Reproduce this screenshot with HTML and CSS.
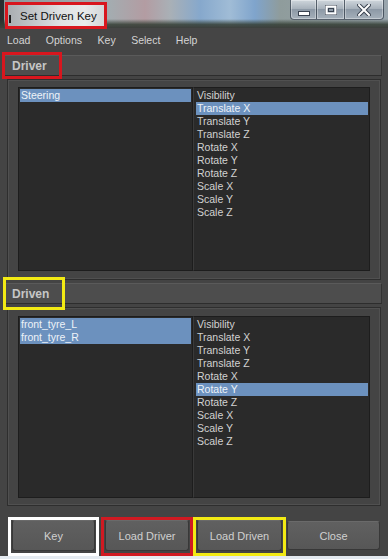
FILE: index.html
```html
<!DOCTYPE html>
<html>
<head>
<meta charset="utf-8">
<link rel="stylesheet" href="styles.css">
</head>
<body>
<div class="titlebar">
  <div class="title-box"><span class="title-icon"></span><span class="title-text">Set Driven Key</span></div>
  <div class="winbtns">
    <div class="wb wb-min"><svg width="12" height="6" viewBox="0 0 12 6"><rect x="0.5" y="1.5" width="11" height="4" fill="#fff" stroke="#3a4350" stroke-width="1"/></svg></div>
    <div class="wb wb-max"><svg width="12" height="10" viewBox="0 0 12 10"><rect x="0.5" y="0.5" width="11" height="9" fill="none" stroke="#3a4350" stroke-width="1"/><rect x="1.5" y="1.5" width="9" height="7" fill="none" stroke="#fff" stroke-width="2"/><rect x="3.5" y="3.5" width="5" height="3" fill="none" stroke="#3a4350" stroke-width="1"/></svg></div>
    <div class="wb wb-close"><svg width="14" height="12" viewBox="0 0 14 12"><path d="M2 1 L12 11 M12 1 L2 11" stroke="#3a4350" stroke-width="4" stroke-linecap="square"/><path d="M2 1 L12 11 M12 1 L2 11" stroke="#fff" stroke-width="2" stroke-linecap="square"/></svg></div>
  </div>
</div>
<div class="menubar">
  <span>Load</span><span>Options</span><span>Key</span><span>Select</span><span>Help</span>
</div>

<div class="sec-head">
  <span class="sec-label">Driver</span>
  <span class="mark mark-red-head"></span>
</div>
<div class="frame">
  <div class="lists lists-driver">
    <div class="list list-l">
      <div class="item sel">Steering</div>
    </div>
    <div class="list list-r">
      <div class="item">Visibility</div>
      <div class="item sel">Translate X</div>
      <div class="item">Translate Y</div>
      <div class="item">Translate Z</div>
      <div class="item">Rotate X</div>
      <div class="item">Rotate Y</div>
      <div class="item">Rotate Z</div>
      <div class="item">Scale X</div>
      <div class="item">Scale Y</div>
      <div class="item">Scale Z</div>
    </div>
  </div>
</div>

<div class="sec-head sec-head-2">
  <span class="sec-label">Driven</span>
  <span class="mark mark-yellow-head"></span>
</div>
<div class="frame frame-2">
  <div class="lists lists-driven">
    <div class="list list-l">
      <div class="item sel">front_tyre_L</div>
      <div class="item sel">front_tyre_R</div>
    </div>
    <div class="list list-r">
      <div class="item">Visibility</div>
      <div class="item">Translate X</div>
      <div class="item">Translate Y</div>
      <div class="item">Translate Z</div>
      <div class="item">Rotate X</div>
      <div class="item sel">Rotate Y</div>
      <div class="item">Rotate Z</div>
      <div class="item">Scale X</div>
      <div class="item">Scale Y</div>
      <div class="item">Scale Z</div>
    </div>
  </div>
</div>

<div class="buttons">
  <div class="bw bw-white"><div class="btn">Key</div></div>
  <div class="bw bw-red"><div class="btn">Load Driver</div></div>
  <div class="bw bw-yellow"><div class="btn">Load Driven</div></div>
  <div class="bw bw-none"><div class="btn">Close</div></div>
</div>
<div class="desk"></div>
</body>
</html>
```

FILE: styles.css
```css
html, body {
  margin: 0;
  padding: 0;
}
body {
  width: 388px;
  height: 559px;
  overflow: hidden;
  background: #444444;
  font-family: "Liberation Sans", Arial, sans-serif;
  font-size: 10.5px;
  color: #d0d0d0;
}

/* ---------- title bar ---------- */
.titlebar {
  position: relative;
  height: 28px;
  display: flex;
  align-items: flex-start;
  background: linear-gradient(90deg, #2a2e30 0, #2a2e30 4px, #8e989c 4px, #a4acb0 110px, #b39ca2 145px, #a9b0b6 170px, #86a8cc 200px, #a0bcd6 230px, #7fa4cc 255px, #8f9c9c 280px, #9aa6ae 388px);
}
.titlebar::after {
  content: "";
  position: absolute;
  left: 0;
  right: 0;
  bottom: 0;
  height: 9px;
  background: linear-gradient(180deg, rgba(60, 80, 60, 0), rgba(52, 62, 52, 0.85) 60%, #3c3f3c);
}
.title-box {
  position: relative;
  z-index: 1;
  margin: 2px 0 0 5px;
  width: 96px;
  height: 21px;
  border: 3px solid #d8161e;
  background: linear-gradient(90deg, #a9adb1, #dfe1e3 55%, #e9eaeb 80%, #d3d6d8);
  display: flex;
  align-items: center;
}
.title-icon {
  width: 2px;
  height: 8px;
  margin: 10px 0 0 1px;
  background: #1c1c1c;
  align-self: flex-start;
}
.title-text {
  margin-left: 9px;
  font-size: 11.5px;
  color: #111;
  white-space: nowrap;
}
.winbtns {
  margin-left: auto;
  margin-right: 4px;
  display: flex;
  position: relative;
  z-index: 1;
}
.wb {
  height: 19px;
  display: flex;
  align-items: center;
  justify-content: center;
  border: 1px solid rgba(50, 60, 72, 0.75);
  border-top: none;
  background: linear-gradient(180deg, #cfd6dc 0, #a8b2bc 45%, #8d99a6 50%, #a5b0ba 100%);
  box-shadow: inset 0 0 0 1px rgba(255, 255, 255, 0.35);
}
.wb-min { width: 25px; border-radius: 0 0 0 4px; }
.wb-max { width: 27px; border-left: none; }
.wb-close { width: 38px; border-left: none; border-radius: 0 0 4px 0; }
.wb-min svg { margin-top: 6px; }

/* ---------- menu ---------- */
.menubar {
  height: 22px;
  display: flex;
  align-items: center;
  gap: 15.5px;
  padding-left: 7px;
  background: #454545;
  font-size: 10.5px;
  color: #d4d4d4;
  padding-top: 1px;
  box-sizing: border-box;
}

/* ---------- section headers ---------- */
.sec-head {
  position: relative;
  margin: 5px 6px 0 3px;
  height: 21px;
  box-sizing: border-box;
  background: #4d4d4d;
  border-top: 1px solid #5a5a5a;
  border-bottom: 1px solid #2d2d2d;
  border-left: 1px solid #3a3a3a;
  border-right: 1px solid #333;
  display: flex;
  align-items: center;
}
.sec-head-2 {
  margin-top: 3px;
}
.sec-label {
  padding-left: 8px;
  font-weight: bold;
  font-size: 12px;
  color: #c6c6c6;
}
.mark {
  position: absolute;
  box-sizing: border-box;
}
.mark-red-head {
  left: -2px;
  top: -4px;
  width: 60px;
  height: 27px;
  border: 3px solid #d8161e;
}
.mark-yellow-head {
  left: -1px;
  top: -7px;
  width: 62px;
  height: 33px;
  border: 3px solid #f2ea14;
}

/* ---------- frames and lists ---------- */
.frame {
  margin: 3px 7px 0 7px;
  border: 1px solid #2e2e2e;
  box-shadow: inset 0 0 0 1px #505050;
  padding: 7px 10px 8px 10px;
  background: #444444;
}
.frame-2 {
  padding-top: 8px;
  padding-bottom: 7px;
}
.lists {
  display: grid;
  grid-template-columns: 175px 1fr;
}
.lists-driver { height: 184px; }
.lists-driven { height: 182px; }
.list {
  background: #2a2a2a;
  border: 1px solid #1d1d1d;
  padding: 1px 1px 0 1px;
  overflow: hidden;
}
.list-r {
  border-left: 1px solid #3a3a3a;
  padding-left: 2px;
}
.item {
  height: 13px;
  line-height: 13px;
  padding-left: 1px;
  white-space: nowrap;
  color: #d2d2d2;
}
.item.sel {
  background: #6c91be;
  color: #eef3f8;
}

/* ---------- buttons ---------- */
.buttons {
  margin-top: 11px;
  padding-left: 8px;
  display: flex;
  height: 39px;
}
.bw {
  box-sizing: border-box;
  height: 39px;
  padding: 0 1px 2px 1px;
  border: 3px solid transparent;
}
.bw-white { width: 91px; border-color: #ffffff; }
.bw-red { width: 92px; margin-left: 2px; border-color: #d01a22; }
.bw-yellow { width: 93px; border-color: #f2ea14; }
.bw-none { width: 95px; border: none; padding: 4px 1px 6px 1px; }
.btn {
  height: 100%;
  box-sizing: border-box;
  display: flex;
  align-items: center;
  justify-content: center;
  background: linear-gradient(180deg, #606060, #575757);
  border: 1px solid #383838;
  border-top-color: #6a6a6a;
  border-radius: 3px;
  font-size: 11px;
  color: #d0d0d0;
}
.bw-white .btn, .bw-red .btn, .bw-yellow .btn {
  margin-top: 0;
}
.desk {
  height: 3px;
  background: #e4eaf0;
}
```
